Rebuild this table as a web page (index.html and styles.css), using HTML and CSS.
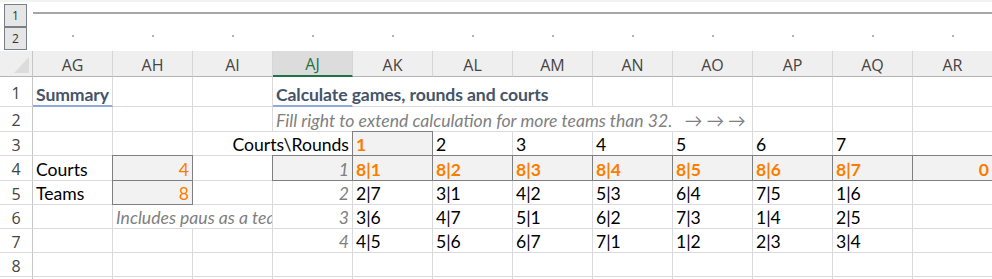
FILE: index.html
```html
<!DOCTYPE html>
<html>
<head>
<meta charset="utf-8">
<link rel="stylesheet" href="styles.css">
</head>
<body>
<div class="band"></div>
<div class="outline">
  <div class="obtns">
    <div class="obtn">1</div>
    <div class="obtn">2</div>
  </div>
  <div class="olines">
    <div class="oline1"><div class="bar"></div></div>
    <div class="odots">
      <i class="dot"></i><i class="dot"></i><i class="dot"></i><i class="dot"></i><i class="dot"></i><i class="dot"></i>
      <i class="dot"></i><i class="dot"></i><i class="dot"></i><i class="dot"></i><i class="dot"></i><i class="dot"></i>
    </div>
  </div>
</div>
<div class="sheet">
  <!-- header -->
  <div class="corner"><span class="tri"></span></div>
  <div class="hd">AG</div><div class="hd">AH</div><div class="hd">AI</div><div class="hd sel">AJ</div>
  <div class="hd">AK</div><div class="hd">AL</div><div class="hd">AM</div><div class="hd">AN</div>
  <div class="hd">AO</div><div class="hd">AP</div><div class="hd">AQ</div><div class="hd">AR</div>

  <!-- row 1 -->
  <div class="rh">1</div>
  <div class="c h3">Summary</div><div class="c"></div><div class="c"></div>
  <div class="c h3 nor">Calculate games, rounds and courts</div><div class="c nor"></div><div class="c nor"></div><div class="c"></div>
  <div class="c"></div><div class="c"></div><div class="c"></div><div class="c"></div><div class="c"></div>

  <!-- row 2 -->
  <div class="rh">2</div>
  <div class="c"></div><div class="c"></div><div class="c"></div>
  <div class="c ex nor">Fill right to extend calculation for more teams than 32. &nbsp;&nbsp;→ → →</div>
  <div class="c nor"></div><div class="c nor"></div><div class="c nor"></div><div class="c nor"></div><div class="c"></div>
  <div class="c"></div><div class="c"></div><div class="c"></div>

  <!-- row 3 -->
  <div class="rh">3</div>
  <div class="c"></div><div class="c"></div><div class="c nor"></div>
  <div class="c r">Courts\Rounds</div>
  <div class="c box calc">1</div><div class="c">2</div><div class="c">3</div><div class="c">4</div>
  <div class="c">5</div><div class="c">6</div><div class="c">7</div><div class="c"></div>

  <!-- row 4 -->
  <div class="rh">4</div>
  <div class="c">Courts</div><div class="c box r org">4</div><div class="c"></div>
  <div class="c box r ex">1</div>
  <div class="c box calc">8|1</div><div class="c box calc">8|2</div><div class="c box calc">8|3</div><div class="c box calc">8|4</div>
  <div class="c box calc">8|5</div><div class="c box calc">8|6</div><div class="c box calc">8|7</div><div class="c box calc r">0</div>

  <!-- row 5 -->
  <div class="rh">5</div>
  <div class="c">Teams</div><div class="c box r org">8</div><div class="c"></div>
  <div class="c r ex">2</div>
  <div class="c">2|7</div><div class="c">3|1</div><div class="c">4|2</div><div class="c">5|3</div>
  <div class="c">6|4</div><div class="c">7|5</div><div class="c">1|6</div><div class="c"></div>

  <!-- row 6 -->
  <div class="rh">6</div>
  <div class="c"></div><div class="c ex span2 clip">Includes paus as a team</div>
  <div class="c r ex">3</div>
  <div class="c">3|6</div><div class="c">4|7</div><div class="c">5|1</div><div class="c">6|2</div>
  <div class="c">7|3</div><div class="c">1|4</div><div class="c">2|5</div><div class="c"></div>

  <!-- row 7 -->
  <div class="rh">7</div>
  <div class="c"></div><div class="c"></div><div class="c"></div>
  <div class="c r ex">4</div>
  <div class="c">4|5</div><div class="c">5|6</div><div class="c">6|7</div><div class="c">7|1</div>
  <div class="c">1|2</div><div class="c">2|3</div><div class="c">3|4</div><div class="c"></div>

  <!-- row 8 -->
  <div class="rh">8</div>
  <div class="c"></div><div class="c"></div><div class="c"></div><div class="c"></div>
  <div class="c"></div><div class="c"></div><div class="c"></div><div class="c"></div>
  <div class="c"></div><div class="c"></div><div class="c"></div><div class="c"></div>

  <!-- row 9 (only its top edge is in view) -->
  <div class="rh"></div>
  <div class="c"></div><div class="c"></div><div class="c"></div><div class="c"></div>
  <div class="c"></div><div class="c"></div><div class="c"></div><div class="c"></div>
  <div class="c"></div><div class="c"></div><div class="c"></div><div class="c"></div>
</div>
</body>
</html>
```
FILE: styles.css
```css
* { box-sizing: border-box; }

html, body {
  margin: 0;
  padding: 0;
  background: #ffffff;
}

body {
  width: 992px;
  height: 279px;
  overflow: hidden;
  font-family: Lato, "Liberation Sans", sans-serif;
}

.band {
  height: 2px;
  background: #f3f3f3;
}

.outline {
  display: flex;
  height: 49px;
}

.obtns {
  width: 33px;
  flex: none;
  padding: 2px 0 0 4px;
  display: flex;
  flex-direction: column;
}

.obtn {
  width: 23px;
  height: 23px;
  border: 1px solid #7a7f88;
  background: #e6e6e6;
  font-family: "Open Sans", "DejaVu Sans", sans-serif;
  font-size: 12px;
  color: #333333;
  display: flex;
  align-items: center;
  justify-content: center;
}

.olines {
  flex: 1;
}

.oline1 {
  height: 23px;
  padding-top: 10px;
}

.bar {
  height: 2px;
  background: #a6a6a6;
}

.odots {
  display: grid;
  grid-template-columns: repeat(12, 80px);
  height: 26px;
}

.dot {
  display: block;
  width: 2px;
  height: 2px;
  margin: 10px auto 0;
  background: #b4b4b4;
}

.sheet {
  display: grid;
  grid-template-columns: 33px repeat(12, 80px);
  grid-template-rows: 26px 30px 25px 24px 25px 24px 24px 24px 24px 24px;
}

.corner {
  background: #efefef;
  border-right: 1px solid #c6c6c6;
  border-bottom: 1px solid #b4b4b4;
  display: flex;
  align-items: flex-end;
  justify-content: flex-end;
  padding: 0 3px 3px 0;
}

.tri {
  display: block;
  width: 0;
  height: 0;
  border-left: 15px solid transparent;
  border-bottom: 16px solid #dcdcdc;
}

.hd {
  background: #efefef;
  border-right: 1px solid #d6d6d6;
  border-bottom: 1px solid #b4b4b4;
  font-family: "Open Sans", "DejaVu Sans", sans-serif;
  font-size: 16px;
  color: #444444;
  display: flex;
  align-items: center;
  justify-content: center;
  padding-top: 2px;
}

.hd.sel {
  background: #dcdcdc;
  color: #217346;
  border-bottom: 2px solid #217346;
}

.rh {
  border-right: 1px solid #c6c6c6;
  border-bottom: 1px solid #dadada;
  font-family: "Open Sans", "DejaVu Sans", sans-serif;
  font-size: 16px;
  color: #444444;
  display: flex;
  align-items: center;
  justify-content: center;
  padding-top: 2px;
}

.c {
  min-width: 0;
  border-right: 1px solid #dadada;
  border-bottom: 1px solid #dadada;
  display: flex;
  align-items: flex-end;
  padding: 0 3px;
  white-space: nowrap;
  font-size: 17.6px;
  line-height: 21px;
  color: #000000;
}

.c.nor {
  border-right-color: transparent;
}

.c.r {
  justify-content: flex-end;
}

.c.h3 {
  font-weight: bold;
  color: #44546a;
  border-bottom: 2px solid #8eaadb;
  letter-spacing: -0.1px;
}

.c.ex {
  font-style: italic;
  color: #7f7f7f;
}

.c.box {
  margin: -1px 0 0 -1px;
  border: 1px solid #7f7f7f;
  background: #f2f2f2;
}

.c.org {
  color: #fa7d00;
}

.c.calc {
  color: #fa7d00;
  font-weight: bold;
}

.c.span2 {
  grid-column: span 2;
}

.c.clip {
  overflow: hidden;
}
```
